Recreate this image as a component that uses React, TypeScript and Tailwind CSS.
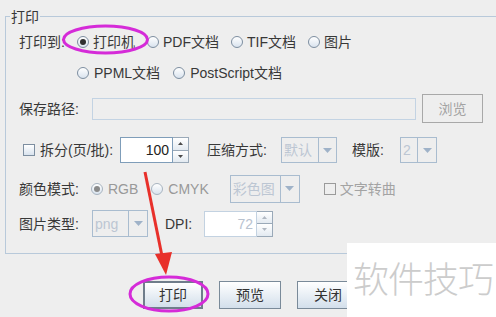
import React from "react";

const font = { fontFamily: '"Liberation Sans", "Noto Sans CJK SC", sans-serif' };

function Radio({ checked = false, disabled = false }: { checked?: boolean; disabled?: boolean }) {
  return (
    <span
      className={`flex h-[12px] w-[12px] shrink-0 items-center justify-center rounded-full border bg-gradient-to-b from-white to-[#d9e3ee] ${
        disabled ? "border-[#a8b4c0]" : "border-[#7d8ea0]"
      }`}
    >
      {checked && (
        <span className={`h-[6px] w-[6px] rounded-full ${disabled ? "bg-[#8a8a8a]" : "bg-[#2f2f2f]"}`} />
      )}
    </span>
  );
}

function Check({ disabled = false }: { disabled?: boolean }) {
  return (
    <span
      className={`block h-[12px] w-[12px] shrink-0 border ${
        disabled ? "border-[#9a9a9a] bg-[#eeeeee]" : "border-[#7d8ea0] bg-gradient-to-b from-white to-[#d9e3ee]"
      }`}
    />
  );
}

function Triangle({ up = false, size = 9, color = "#9fb2c8" }: { up?: boolean; size?: number; color?: string }) {
  const h = Math.round(size / 2);
  return (
    <svg width={size} height={h} viewBox={`0 0 ${size} ${h}`}>
      <polygon points={up ? `0,${h} ${size},${h} ${size / 2},0` : `0,0 ${size},0 ${size / 2},${h}`} fill={color} />
    </svg>
  );
}

function Combo({ text, textW, arrowW = 19, h = 26 }: { text: string; textW: number; arrowW?: number; h?: number }) {
  return (
    <div className="flex border border-[#a9bccf] bg-[#eeeeee]" style={{ height: h }}>
      <div
        className="flex items-center overflow-hidden pl-[2px] text-[14px] leading-[16px] text-[#bcc6d3]"
        style={{ width: textW }}
      >
        {text}
      </div>
      <div className="flex items-center justify-center border-l border-[#a9bccf]" style={{ width: arrowW }}>
        <Triangle />
      </div>
    </div>
  );
}

function Spinner({ value, disabled = false }: { value: string; disabled?: boolean }) {
  return (
    <div className="flex h-[26px]">
      <div
        className={`flex w-[53px] items-center justify-end border pr-[3px] text-[14px] leading-[16px] ${
          disabled ? "border-[#c3d2e1] bg-white text-[#b8c2cf]" : "border-[#7f9db9] bg-white text-[#222]"
        }`}
      >
        {value}
      </div>
      <div className="flex w-[16px] flex-col border border-l-0 border-[#9aa9b8]">
        <div className="flex flex-1 items-center justify-center border-b border-[#9aa9b8] bg-gradient-to-b from-white to-[#e3eaf1]">
          <Triangle up size={5} color={disabled ? "#b0b8c2" : "#4a4a4a"} />
        </div>
        <div className="flex flex-1 items-center justify-center bg-gradient-to-b from-white to-[#e3eaf1]">
          <Triangle size={5} color={disabled ? "#b0b8c2" : "#4a4a4a"} />
        </div>
      </div>
    </div>
  );
}

function Btn({ label, w, focused = false }: { label: string; w: number; focused?: boolean }) {
  return (
    <div
      className={`flex h-[28px] items-center justify-center bg-gradient-to-b from-white to-[#d3dfeb] text-[14px] leading-[16px] text-[#333] ${
        focused ? "border-2 border-[#6f7d8b]" : "border border-[#7a8a99]"
      }`}
      style={{ width: w }}
    >
      {label}
    </div>
  );
}

export default function App() {
  const radios1 = [
    { label: "打印机", checked: true },
    { label: "PDF文档" },
    { label: "TIF文档" },
    { label: "图片" },
  ];

  return (
    <div className="relative h-[317px] w-[496px] overflow-hidden bg-[#eeeeee] text-[14px] text-[#383838]" style={font}>
      <div className="relative ml-[5px] mt-[16px] h-[238px] w-[495px] border border-[#b8c9da] pl-[13px] pt-[13px]">
        <span className="absolute -top-[9px] left-[4px] bg-[#eeeeee] px-[1px] leading-[18px]">打印</span>

        {/* 打印到 */}
        <div className="flex h-[24px] items-center leading-[16px]">
          <span className="w-[58px]">打印到:</span>
          <div className="flex items-center gap-[12px]">
            {radios1.map((r) => (
              <div key={r.label} className="flex items-center gap-[4px]">
                <Radio checked={r.checked} />
                <span>{r.label}</span>
              </div>
            ))}
          </div>
        </div>
        <div className="mt-[7px] flex h-[24px] items-center pl-[58px] leading-[16px]">
          <div className="flex items-center gap-[5px]">
            <Radio />
            <span>PPML文档</span>
          </div>
          <div className="ml-[13px] flex items-center gap-[5px]">
            <Radio />
            <span>PostScript文档</span>
          </div>
        </div>

        {/* 保存路径 */}
        <div className="mt-[9px] flex h-[29px] items-center leading-[16px]">
          <span className="w-[73px]">保存路径:</span>
          <div className="h-[22px] w-[324px] border border-[#c3d3e3] bg-[#eeeeee]" />
          <div className="ml-[6px] flex h-[29px] w-[61px] items-center justify-center border border-[#a8a8a8] text-[#a3a3a3]">
            浏览
          </div>
        </div>

        {/* 拆分 */}
        <div className="mt-[13px] flex h-[28px] items-center leading-[16px]">
          <div className="flex w-[101px] items-center gap-[5px] pl-[4px]">
            <Check />
            <span className="whitespace-nowrap">拆分(页/批):</span>
          </div>
          <Spinner value="100" />
          <span className="ml-[18px] w-[74px]">压缩方式:</span>
          <Combo text="默认" textW={36} arrowW={18} />
          <span className="ml-[15px] w-[48px]">模版:</span>
          <Combo text="2" textW={16} arrowW={19} />
        </div>

        {/* 颜色模式 */}
        <div className="mt-[10px] flex h-[29px] items-center leading-[16px]">
          <span className="w-[72px]">颜色模式:</span>
          <div className="flex items-center gap-[5px] text-[#999]">
            <Radio checked disabled />
            <span>RGB</span>
          </div>
          <div className="ml-[13px] flex items-center gap-[5px] text-[#999]">
            <Radio disabled />
            <span>CMYK</span>
          </div>
          <div className="ml-[21px]">
            <Combo text="彩色图" textW={49} arrowW={19} h={28} />
          </div>
          <div className="ml-[24px] flex items-center gap-[4px] text-[#a3a3a3]">
            <Check disabled />
            <span>文字转曲</span>
          </div>
        </div>

        {/* 图片类型 */}
        <div className="mt-[7px] flex h-[27px] items-center leading-[16px]">
          <span className="w-[73px]">图片类型:</span>
          <Combo text="png" textW={35} arrowW={19} h={27} />
          <span className="ml-[17px] w-[39px]">DPI:</span>
          <Spinner value="72" disabled />
        </div>
      </div>

      {/* 按钮 */}
      <div className="ml-[143px] mt-[27px] flex gap-[16px]">
        <Btn label="打印" w={60} focused />
        <Btn label="预览" w={62} />
        <Btn label="关闭" w={62} />
      </div>

      {/* 标注 */}
      <svg className="pointer-events-none absolute inset-0" width={496} height={317}>
        <ellipse cx={105.5} cy={39.5} rx={42} ry={13.5} fill="none" stroke="#d52bd8" strokeWidth={3} />
        <ellipse cx={169} cy={294} rx={39} ry={17} fill="none" stroke="#d52bd8" strokeWidth={3} />
        <line x1={145} y1={172} x2={162} y2={256} stroke="#e8302a" strokeWidth={3} />
        <polygon points="155,254 172,252 166,275" fill="#e8302a" />
      </svg>

      {/* 水印 */}
      <div className="absolute bottom-0 left-[347px] right-0 top-[243px] bg-white">
        <span
          className="absolute left-[6px] top-[14px] text-[36px] font-light leading-[40px] tracking-[-1px] text-[#cccccc]"
          style={{ fontFamily: '"Noto Sans CJK SC", sans-serif' }}
        >
          软件技巧
        </span>
      </div>
    </div>
  );
}
